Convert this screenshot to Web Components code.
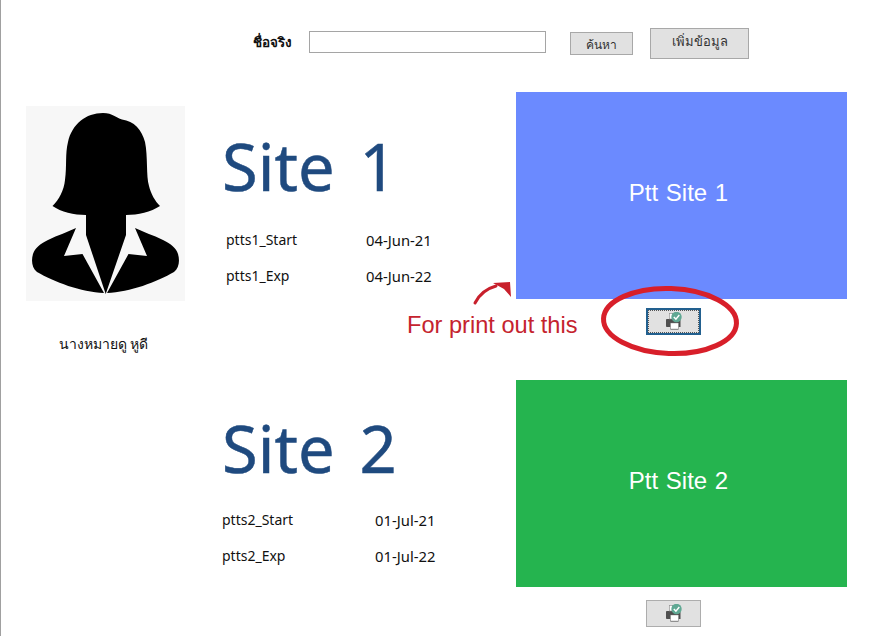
<!DOCTYPE html>
<html><head><meta charset="utf-8"><style>
html,body{margin:0;padding:0;background:#fff}
body{font-family:"Noto Sans","Liberation Sans",sans-serif}
</style></head><body>
<form-page>
<search-bar></search-bar>
<site-row name="Site 1" label="Ptt Site 1" color="#6b8aff" prefix="ptts1" start="04-Jun-21" exp="04-Jun-22" top="34" inset="4" col="140" focused person>
</site-row>
<site-row name="Site 2" label="Ptt Site 2" color="#25b44f" prefix="ptts2" start="01-Jul-21" exp="01-Jul-22" top="28" inset="0" col="153"></site-row>
</form-page>
<script>
const def=(n,html)=>customElements.define(n,class extends HTMLElement{connectedCallback(){if(this.shadowRoot)return;const r=this.attachShadow({mode:'open'});r.innerHTML=typeof html==='function'?html(this):html;}});
def('form-page',`<style>:host{display:block;box-sizing:border-box;width:882px;height:636px;border-left:1px solid #a0a0a0;overflow:hidden;position:relative;background:#fff}</style><slot></slot>`);
def('search-bar',`<style>
:host{display:flex;box-sizing:border-box;height:92px;padding:28px 0 0 252px;align-items:flex-start;font-family:"Noto Sans","Liberation Sans",sans-serif}
.l{font-size:13.500px;font-weight:700;color:#111;width:56px;line-height:28px}
input{box-sizing:border-box;width:237px;height:22px;margin:3px 24px 0 0;border:1px solid #a5a5a5;background:#fff;padding:0}
button{box-sizing:border-box;border:1px solid #a8a8a8;background:#e1e1e1;color:#333;font:12px "Noto Sans","Liberation Sans",sans-serif;padding:0}
.a{width:63px;height:23px;margin:4px 17px 0 0;padding-top:2px}.b{width:99px;height:31px;font-size:13px;padding-bottom:4px}
</style><span class="l">ชื่อจริง</span><input aria-label="ชื่อจริง"><button class="a">ค้นหา</button><button class="b">เพิ่มข้อมูล</button>`);
def('person-card',`<style>
:host{display:block;padding:14px 0 0 25px;width:159px;font-family:"Noto Sans","Liberation Sans",sans-serif}
svg{display:block;width:159px;height:195px}
p{margin:33px 4px 0 0;text-align:center;font-size:14px;line-height:20px;color:#111;font-weight:500;white-space:nowrap}
</style><svg viewBox="0 0 159 195"><rect width="159" height="195" fill="#f7f7f7"/>
<path d="M77 7C87 7 90 12 96 13.500C108 15 116 24 119 36C122 50 120 70 123 80C125 88 129 95 134 100C125 106 112 109 100 109V129L79.700 188L60 129V109C48 109 35 106 26.500 100C33 94 38 84 39 74C41 60 39 48 42 36C46 18 60 7 77 7Z"/>
<path d="M50 122L38 150L56.500 148L78 187C55 186 28 176 11 166C6 162 5 155 7 148C9 142 14 138 22 134C32 129 42 126 50 122Z"/>
<path d="M109 122L121 150L102.500 148L81 187C104 186 131 176 148 166C153 162 154 155 152 148C150 142 145 138 137 134C127 129 117 126 109 122Z"/>
</svg><p>นางหมายดู หูดี</p>`);
def('print-button',h=>`<style>
:host{display:block;width:55px;height:27px}
button{box-sizing:border-box;display:flex;align-items:center;justify-content:center;width:100%;height:100%;padding:0;background:#e1e1e1;border:${h.hasAttribute('focused')?'2px solid #22608f':'1px solid #adadad'};${h.hasAttribute('focused')?'outline:1px dotted #555;outline-offset:-3px;':''}}
</style><button aria-label="print"><svg width="20" height="19" viewBox="0 0 20 19">
<path d="M3 7H15.500C16.200 7 16.500 7.500 16.500 8V15H14.500V17.500H6.500V15H3C2.400 15 2 14.500 2 14V8C2 7.500 2.400 7 3 7Z" fill="#4f4f4f"/>
<rect x="5.300" y="1.300" width="3.400" height="5.700" fill="#fff" stroke="#888" stroke-width=".6"/>
<rect x="6.500" y="11" width="8" height="6" fill="#fff" stroke="#777" stroke-width=".4"/>
<circle cx="12.500" cy="5" r="5.200" fill="#5fa893"/>
<path d="M9.800 5L11.900 7.100L15.300 3" fill="none" stroke="#fff" stroke-width="1.400"/>
</svg></button>`);
def('site-row',h=>{const a=n=>h.getAttribute(n);const f=h.hasAttribute('focused');const p=h.hasAttribute('person');
return `<style>
:host{display:grid;grid-template-columns:221px 294px 331px;height:288px;font-family:"Noto Sans","Liberation Sans",sans-serif;color:#111}
.mid{padding-top:${a('top')}px}
h1{margin:0;font-weight:400;font-size:65px;line-height:80px;color:#1f4a7f;word-spacing:8px;-webkit-text-stroke:.5px #1f4a7f}
dl{margin:${p?'24px':'22px'} 0 0;padding-left:${a('inset')}px;display:grid;grid-template-columns:${a('col')}px auto;row-gap:16px;font-size:14px;line-height:20px}
dt,dd{margin:0}
dd{font-size:14.800px}
.r{display:flex;flex-direction:column;align-items:flex-start}
.site{width:331px;height:207px;background:${a('color')};display:flex;align-items:center;justify-content:center;color:#fff;font:24px "Liberation Sans",Arial,sans-serif;word-spacing:1px;padding:0 6px 6px 0;box-sizing:border-box}
print-button{margin:${f?'9px':'13px'} 0 0 130px}
</style>
<div>${p?'<person-card></person-card>':''}</div>
<div class="mid"><h1>${a('name')}</h1><dl><dt>${a('prefix')}_Start</dt><dd>${a('start')}</dd><dt>${a('prefix')}_Exp</dt><dd>${a('exp')}</dd></dl></div>
<div class="r"><div class="site">${a('label')}</div><print-button ${f?'focused':''}></print-button></div>
${f?'<print-note></print-note>':''}`});
def('print-note',`<style>
:host{position:absolute;left:400px;top:278px;width:345px;height:82px;display:block}
span{position:absolute;left:6px;top:33px;font:23.600px/28px "Liberation Sans",Arial,sans-serif;color:#c5232e;white-space:nowrap}
svg{position:absolute;left:0;top:0}
</style><svg width="345" height="82" viewBox="0 0 345 82">
<path d="M74 25C78 17 84 11 95 8" fill="none" stroke="#c8202c" stroke-width="3" stroke-linecap="round"/>
<path d="M92 5L109 4L110 19L103 11Z" fill="#c8202c"/>
<ellipse cx="269" cy="43" rx="66.500" ry="32.500" fill="none" stroke="#d81f2a" stroke-width="5" transform="rotate(2 269 43)"/>
</svg><span>For print out this</span>`);
</script>
</body></html>
